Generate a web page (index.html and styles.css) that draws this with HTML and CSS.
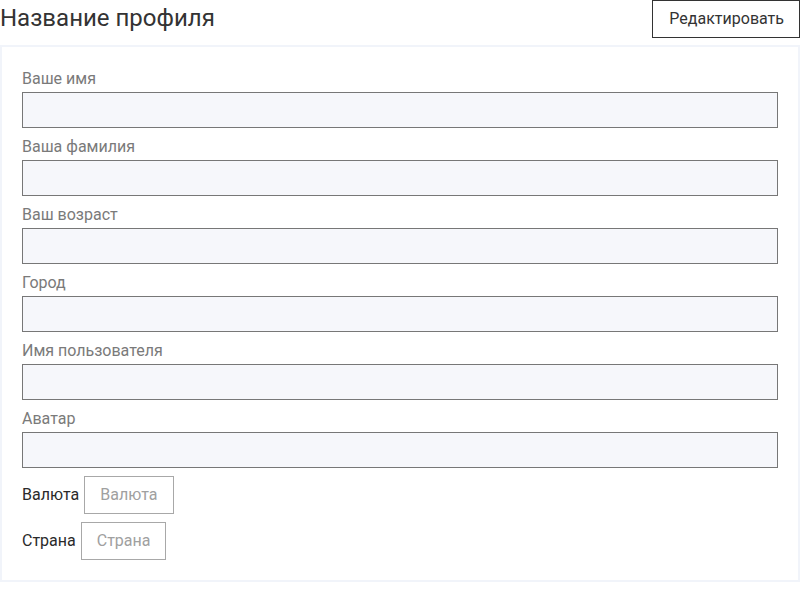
FILE: index.html
```html
<!DOCTYPE html>
<html lang="ru">
<head>
<meta charset="utf-8">
<link rel="stylesheet" href="styles.css">
</head>
<body>
<div class="page">
  <header class="header">
    <h1 class="title">Название профиля</h1>
    <button class="edit-btn">Редактировать</button>
  </header>
  <section class="card">
    <div class="field">
      <label class="field-label">Ваше имя</label>
      <div class="field-input"></div>
    </div>
    <div class="field">
      <label class="field-label">Ваша фамилия</label>
      <div class="field-input"></div>
    </div>
    <div class="field">
      <label class="field-label">Ваш возраст</label>
      <div class="field-input"></div>
    </div>
    <div class="field">
      <label class="field-label">Город</label>
      <div class="field-input"></div>
    </div>
    <div class="field">
      <label class="field-label">Имя пользователя</label>
      <div class="field-input"></div>
    </div>
    <div class="field">
      <label class="field-label">Аватар</label>
      <div class="field-input"></div>
    </div>
    <div class="inline-row">
      <span class="inline-label">Валюта</span>
      <span class="inline-box">Валюта</span>
    </div>
    <div class="inline-row">
      <span class="inline-label">Страна</span>
      <span class="inline-box">Страна</span>
    </div>
  </section>
</div>
</body>
</html>
```
FILE: styles.css
```css
* { box-sizing: border-box; }
html, body {
  margin: 0;
  padding: 0;
  background: #ffffff;
  font-family: Roboto, "Liberation Sans", sans-serif;
}
.page {
  width: 800px;
}
.header {
  display: flex;
  justify-content: space-between;
  align-items: flex-start;
  height: 38px;
  margin-bottom: 7px;
}
.title {
  margin: 0;
  font-size: 24px;
  font-weight: 400;
  line-height: 36px;
  color: #333333;
}
.edit-btn {
  font-family: inherit;
  font-size: 16px;
  line-height: 20px;
  padding: 8px 15px 8px 16px;
  height: 38px;
  border: 1px solid #333333;
  background: #ffffff;
  color: #333333;
  border-radius: 0;
}
.card {
  border: 2px solid #f1f4fa;
  padding: 20px;
}
.field {
  margin-bottom: 7px;
}
.field-label {
  display: block;
  font-size: 16px;
  line-height: 24px;
  margin-bottom: 1px;
  color: #7a7a7a;
}
.field-input {
  height: 36px;
  border: 1px solid #777777;
  background: #f6f7fb;
}
.inline-row {
  display: flex;
  align-items: center;
  gap: 5px;
  margin-top: 8px;
}
.inline-label {
  font-size: 16px;
  line-height: 20px;
  color: #2a2a2a;
}
.inline-box {
  display: block;
  font-size: 16px;
  line-height: 20px;
  padding: 8px 15px;
  border: 1px solid #a8a8a8;
  color: #a0a0a0;
}
```
